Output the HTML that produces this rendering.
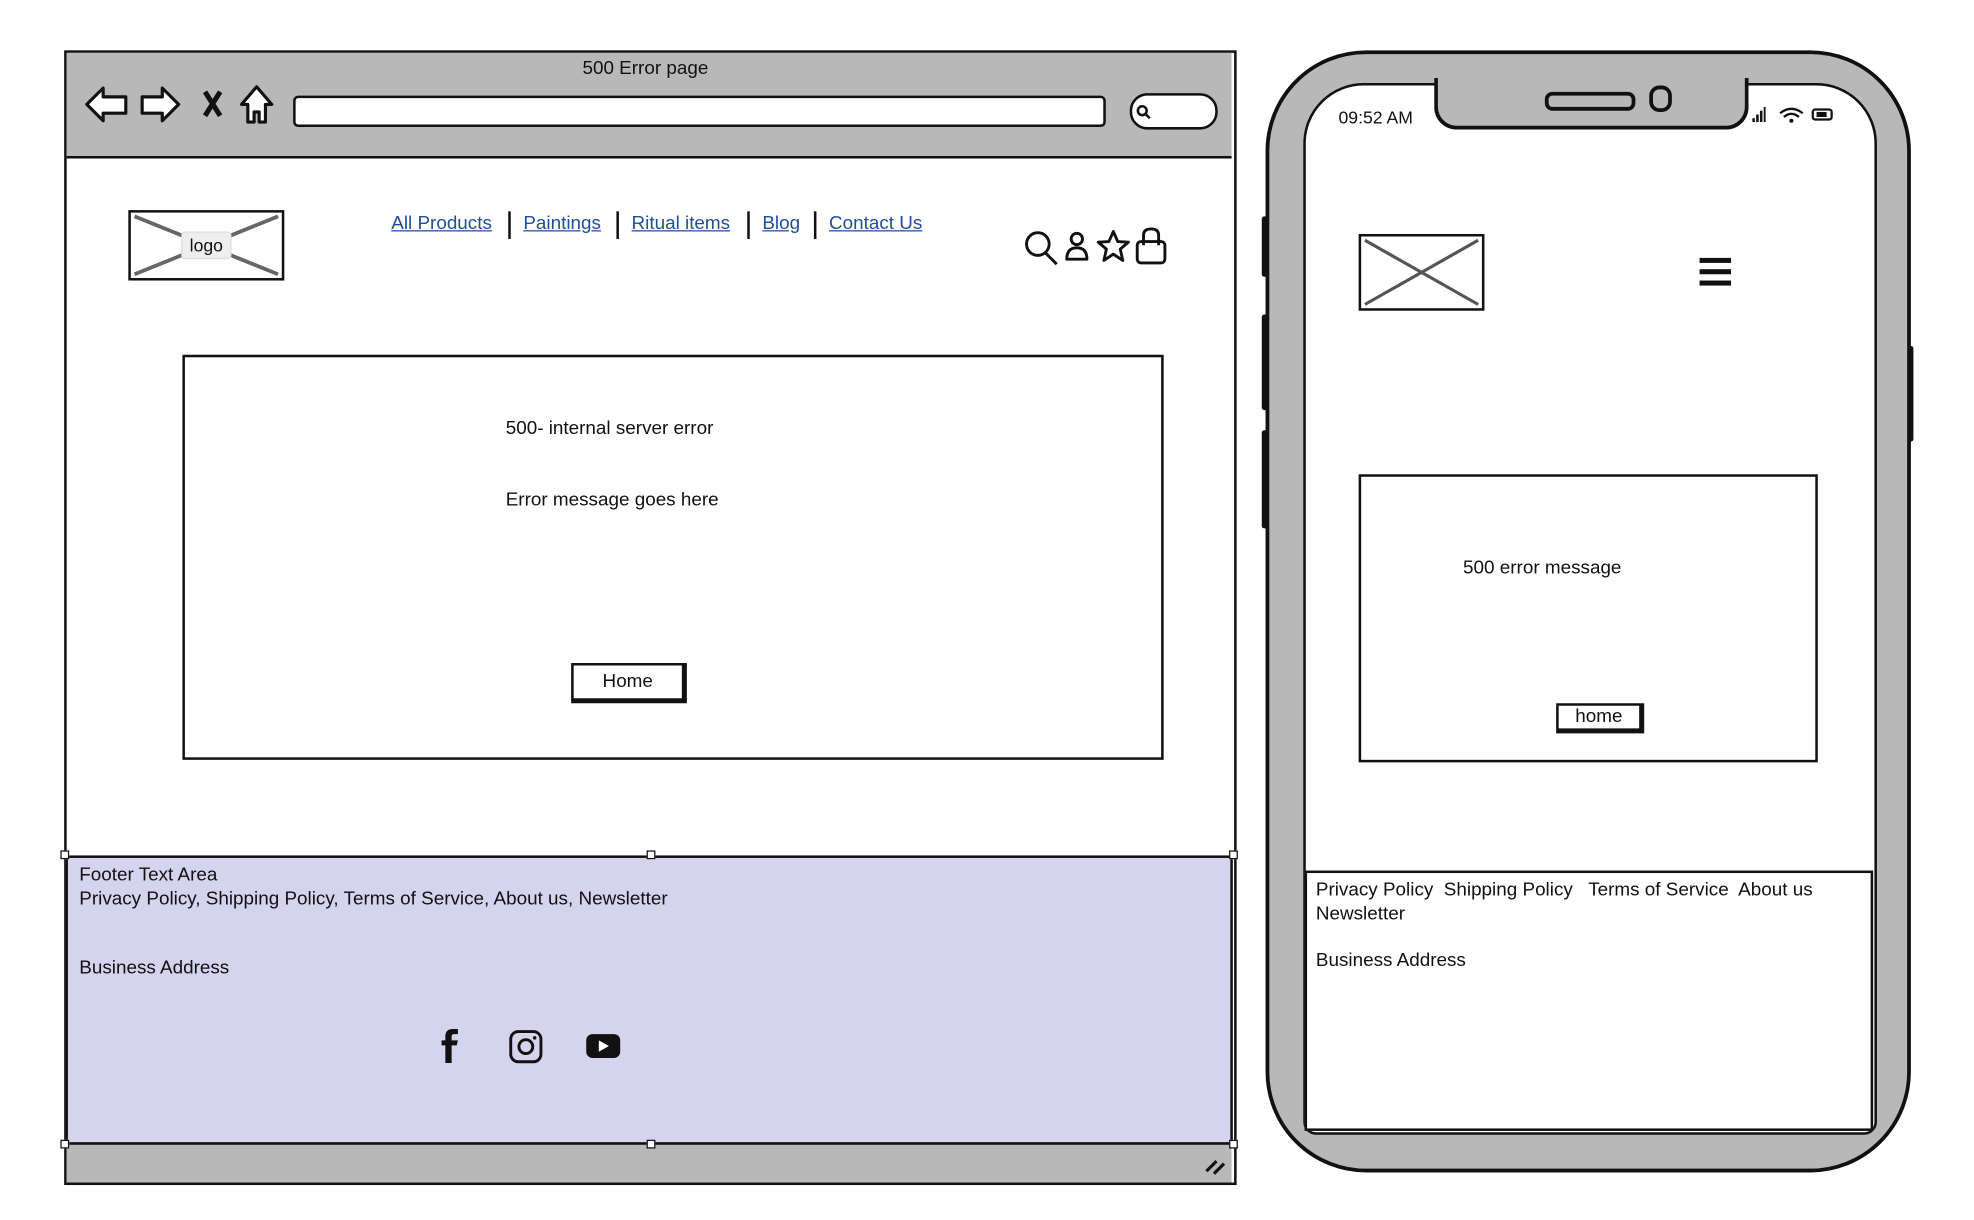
<!DOCTYPE html>
<html><head><meta charset="utf-8">
<style>
html,body{margin:0;padding:0;background:#fff;width:1974px;height:1220px;overflow:hidden}
#w{position:absolute;left:0;top:0;width:1570px;height:970px;transform:scale(1.258);transform-origin:0 0;font-family:"Liberation Sans",sans-serif;color:#111}
.a{position:absolute}
.t{position:absolute;font-size:15px;white-space:nowrap}
.lnk{position:absolute;font-size:15px;color:#1f4e9c;text-decoration:underline;white-space:nowrap}
.sep{position:absolute;width:2px;height:22px;background:#111;top:168px}
</style></head><body><div id="w">
<!-- browser -->
<div class="a" style="left:51px;top:40px;width:928px;height:898px;border:2px solid #111;background:#fff"></div>
<div class="a" style="left:53px;top:42px;width:926px;height:82px;background:#b8b8b8;border-bottom:2px solid #111"></div>
<div class="t" style="left:463px;top:46px">500 Error page</div>
<svg class="a" style="left:64px;top:64px" width="160" height="38" viewBox="0 0 160 38">
<g fill="#fff" stroke="#111" stroke-width="2.5" stroke-linejoin="round">
<path d="M5 19 L18 6 L18 13 L36 13 L36 26 L18 26 L18 32 Z"/>
<path d="M78 19 L65 6 L65 13 L49 13 L49 26 L65 26 L65 32 Z"/>
<path d="M140 5 L152 19 L147 19 L147 33 L142 33 L142 25 L138 25 L138 33 L133 33 L133 19 L128 19 Z"/>
</g>
<path d="M99 9 L111 28 M111 9 L99 28" stroke="#111" stroke-width="4"/>
</svg>
<div class="a" style="left:233px;top:76px;width:642px;height:21px;border:2.5px solid #111;background:#fff;border-radius:4px"></div>
<div class="a" style="left:898px;top:74px;width:66px;height:25px;border:2.5px solid #111;background:#fff;border-radius:14px"></div>
<svg class="a" style="left:902px;top:82px" width="14" height="14"><circle cx="6" cy="6" r="3.5" stroke="#111" stroke-width="2" fill="none"/><path d="M8 8 L12 12" stroke="#111" stroke-width="2"/></svg>
<!-- logo -->
<div class="a" style="left:102px;top:167px;width:120px;height:52px;border:2.5px solid #111;background:#fff;overflow:hidden">
<svg width="120" height="52"><path d="M3 3 L117 49 M117 3 L3 49" stroke="#666" stroke-width="3"/></svg></div>
<div class="a" style="left:144px;top:184px;width:38px;height:20px;background:#eee;border:1px solid #ddd;border-radius:3px;font-size:14px;text-align:center;line-height:20px">logo</div>
<div class="lnk" style="left:311px;top:169px">All Products</div>
<div class="sep" style="left:404px"></div>
<div class="lnk" style="left:416px;top:169px">Paintings</div>
<div class="sep" style="left:490px"></div>
<div class="lnk" style="left:502px;top:169px">Ritual items</div>
<div class="sep" style="left:594px"></div>
<div class="lnk" style="left:606px;top:169px">Blog</div>
<div class="sep" style="left:647px"></div>
<div class="lnk" style="left:659px;top:169px">Contact Us</div>
<svg class="a" style="left:812px;top:180px" width="120" height="32" viewBox="0 0 120 32" fill="none" stroke="#111" stroke-width="2.3" stroke-linejoin="round">
<circle cx="13" cy="14" r="9"/><path d="M19 21 L28 30"/>
<circle cx="44" cy="10" r="4.5"/><path d="M36 26 Q36 17 44 17 Q52 17 52 26 Z"/>
<path d="M73 4 L76.5 12 L85 12.5 L78.5 18 L80.5 27 L73 22 L65.5 27 L67.5 18 L61 12.5 L69.5 12 Z"/>
<rect x="92" y="12" width="22" height="17" rx="3"/><path d="M97 15 V7 Q97 2 103 2 Q109 2 109 7 V15"/>
</svg>
<!-- error box -->
<div class="a" style="left:145px;top:282px;width:776px;height:318px;border:2px solid #111;background:#fff"></div>
<div class="t" style="left:402px;top:332px">500- internal server error</div>
<div class="t" style="left:402px;top:389px">Error message goes here</div>
<div class="a" style="left:454px;top:527px;width:86px;height:26px;border:2px solid #111;border-right-width:4px;border-bottom-width:4px;background:#fff;font-size:15px;text-align:center;line-height:26px">Home</div>
<!-- footer -->
<div class="a" style="left:52px;top:680px;width:924px;height:226px;background:#d5d3ee;border:2.5px solid #111"></div>
<div class="t" style="left:63px;top:687px">Footer Text Area</div>
<div class="t" style="left:63px;top:706px">Privacy Policy, Shipping Policy, Terms of Service, About us, Newsletter</div>
<div class="t" style="left:63px;top:761px">Business Address</div>
<svg class="a" style="left:345px;top:815px" width="160" height="32" viewBox="0 0 160 32">
<path d="M14 30 V16 H18 L19 12 H14 V9 Q14 7 16 7 H19 V3 H15 Q9 3 9 9 V12 H6 V16 H9 V30 Z" fill="#111"/>
<rect x="61" y="5" width="24" height="24" rx="6" fill="none" stroke="#111" stroke-width="2.3"/>
<circle cx="73" cy="17" r="5.5" fill="none" stroke="#111" stroke-width="2.3"/><circle cx="80" cy="10" r="1.4" fill="#111"/>
<rect x="121" y="7" width="27" height="19" rx="5" fill="#111"/><path d="M131 12 L139 16.5 L131 21 Z" fill="#fff"/>
</svg>
<div class="a" style="left:53px;top:908px;width:926px;height:30px;background:#b8b8b8;border-top:2px solid #111"></div>
<svg class="a" style="left:956px;top:918px" width="20" height="18"><path d="M3 13 L11 5 M9 15 L17 7" stroke="#111" stroke-width="2.5"/></svg>
<!-- handles -->
<div class="a" style="left:48px;top:676px;width:5px;height:5px;border:1px solid #111;background:#fff"></div>
<div class="a" style="left:514px;top:676px;width:5px;height:5px;border:1px solid #111;background:#fff"></div>
<div class="a" style="left:977px;top:676px;width:5px;height:5px;border:1px solid #111;background:#fff"></div>
<div class="a" style="left:48px;top:906px;width:5px;height:5px;border:1px solid #111;background:#fff"></div>
<div class="a" style="left:514px;top:906px;width:5px;height:5px;border:1px solid #111;background:#fff"></div>
<div class="a" style="left:977px;top:906px;width:5px;height:5px;border:1px solid #111;background:#fff"></div>
<!-- phone -->
<div class="a" style="left:1003px;top:172px;width:6px;height:48px;background:#111;border-radius:2px"></div>
<div class="a" style="left:1003px;top:250px;width:6px;height:76px;background:#111;border-radius:2px"></div>
<div class="a" style="left:1003px;top:342px;width:6px;height:78px;background:#111;border-radius:2px"></div>
<div class="a" style="left:1514px;top:275px;width:7px;height:76px;background:#111;border-radius:2px"></div>
<div class="a" style="left:1006px;top:40px;width:507px;height:886px;background:#b8b8b8;border:3.5px solid #111;border-radius:80px"></div>
<div class="a" style="left:1036px;top:66px;width:452px;height:832px;background:#fff;border:2.5px solid #111;border-radius:48px;border-bottom-left-radius:10px;border-bottom-right-radius:10px"></div>
<div class="a" style="left:1140px;top:62px;width:244px;height:38px;background:#b8b8b8;border:3px solid #111;border-top:none;border-radius:0 0 18px 18px"></div>
<div class="a" style="left:1228px;top:73px;width:66px;height:9px;border:3px solid #111;border-radius:6px;background:#b8b8b8"></div>
<div class="a" style="left:1311px;top:68px;width:12px;height:15px;border:3px solid #111;border-radius:8px"></div>
<div class="t" style="left:1064px;top:85px;font-size:14px">09:52 AM</div>
<svg class="a" style="left:1392px;top:83px" width="70" height="16"><g fill="#111"><rect x="1" y="11" width="2" height="3"/><rect x="4" y="8" width="2" height="6"/><rect x="7" y="5" width="2" height="9"/><rect x="10" y="2" width="1.5" height="12"/></g>
<path d="M23 7 Q32 0 41 7 M26 10 Q32 5 38 10" stroke="#111" stroke-width="1.8" fill="none"/><circle cx="32" cy="13" r="1.6" fill="#111"/>
<rect x="49" y="4" width="15" height="8" rx="2" fill="none" stroke="#111" stroke-width="1.8"/><rect x="52" y="6" width="8" height="4" fill="#111"/></svg>
<div class="a" style="left:1080px;top:186px;width:96px;height:57px;border:2.5px solid #111;overflow:hidden"><svg width="96" height="57"><path d="M3 3 L93 54 M93 3 L3 54" stroke="#555" stroke-width="2.5"/></svg></div>
<div class="a" style="left:1351px;top:205px;width:25px;height:3.5px;background:#111"></div>
<div class="a" style="left:1351px;top:214px;width:25px;height:3.5px;background:#111"></div>
<div class="a" style="left:1351px;top:223px;width:25px;height:3.5px;background:#111"></div>
<div class="a" style="left:1080px;top:377px;width:361px;height:225px;border:2px solid #111;background:#fff"></div>
<div class="t" style="left:1163px;top:443px">500 error message</div>
<div class="a" style="left:1237px;top:559px;width:64px;height:18px;border:2px solid #111;border-right-width:4px;border-bottom-width:4px;background:#fff;font-size:15px;text-align:center;line-height:18px">home</div>
<div class="a" style="left:1037px;top:692px;width:448px;height:203px;border:2px solid #111;background:#fff"></div>
<div class="t" style="left:1046px;top:699px">Privacy Policy&nbsp; Shipping Policy&nbsp;&nbsp; Terms of Service&nbsp; About us</div>
<div class="t" style="left:1046px;top:718px">Newsletter</div>
<div class="t" style="left:1046px;top:755px">Business Address</div>
</div></body></html>
